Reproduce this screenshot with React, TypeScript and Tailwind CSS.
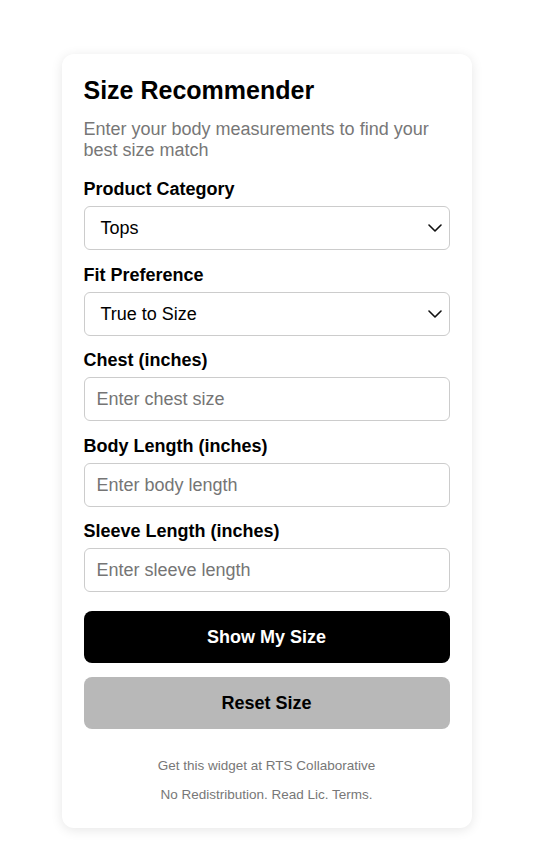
import React from "react";

function Chevron() {
  return (
    <svg width="14" height="8" viewBox="0 0 14 8" fill="none" className="absolute right-[7px] top-1/2 -translate-y-1/2 pointer-events-none">
      <path d="M1 1 L7 7 L13 1" stroke="#111" strokeWidth="1.6" strokeLinecap="round" strokeLinejoin="round" />
    </svg>
  );
}

function SelectField({ label, value, mb }: { label: string; value: string; mb: string }) {
  return (
    <div className={mb}>
      <div className="text-[18px] leading-[20px] font-bold text-black mb-[7px]">{label}</div>
      <div className="relative h-[44px] rounded-[6px] border border-[#cccccc] bg-white flex items-center pl-[16px]">
        <span className="text-[18px] text-black">{value}</span>
        <Chevron />
      </div>
    </div>
  );
}

function InputField({ label, placeholder, mb }: { label: string; placeholder: string; mb: string }) {
  return (
    <div className={mb}>
      <div className="text-[18px] leading-[20px] font-bold text-black mb-[7px]">{label}</div>
      <input
        placeholder={placeholder}
        className="block w-full h-[44px] rounded-[6px] border border-[#cccccc] bg-white px-[12px] text-[18px] text-black placeholder:text-[#757575] outline-none"
      />
    </div>
  );
}

export default function App() {
  return (
    <div className="min-h-[867px] bg-white flex justify-center pt-[54px]" style={{ fontFamily: '"Liberation Sans", Arial, sans-serif' }}>
      <div className="w-[410px] h-[774px] bg-white rounded-[12px] shadow-[0_2px_12px_rgba(0,0,0,0.10)] px-[22px] pt-[22px]">
        <h1 className="text-[25px] leading-[28px] font-bold text-black">Size Recommender</h1>
        <p className="mt-[15px] text-[18px] leading-[21px] text-[#777777]">
          Enter your body measurements to find your best size match
        </p>
        <div className="mt-[18px]">
          <SelectField label="Product Category" value="Tops" mb="mb-[15px]" />
          <SelectField label="Fit Preference" value="True to Size" mb="mb-[14px]" />
          <InputField label="Chest (inches)" placeholder="Enter chest size" mb="mb-[15px]" />
          <InputField label="Body Length (inches)" placeholder="Enter body length" mb="mb-[14px]" />
          <InputField label="Sleeve Length (inches)" placeholder="Enter sleeve length" mb="mb-0" />
        </div>
        <button className="block mt-[19px] w-full h-[52px] rounded-[8px] bg-black text-white text-[18px] font-bold">
          Show My Size
        </button>
        <button className="block mt-[14px] w-full h-[52px] rounded-[8px] bg-[#b8b8b8] text-black text-[18px] font-bold">
          Reset Size
        </button>
        <div className="mt-[29px] text-center text-[13.5px] text-[#777777]">
          <p className="leading-[16px]">Get this widget at RTS Collaborative</p>
          <p className="mt-[13px] leading-[16px]">No Redistribution. Read Lic. Terms.</p>
        </div>
      </div>
    </div>
  );
}
